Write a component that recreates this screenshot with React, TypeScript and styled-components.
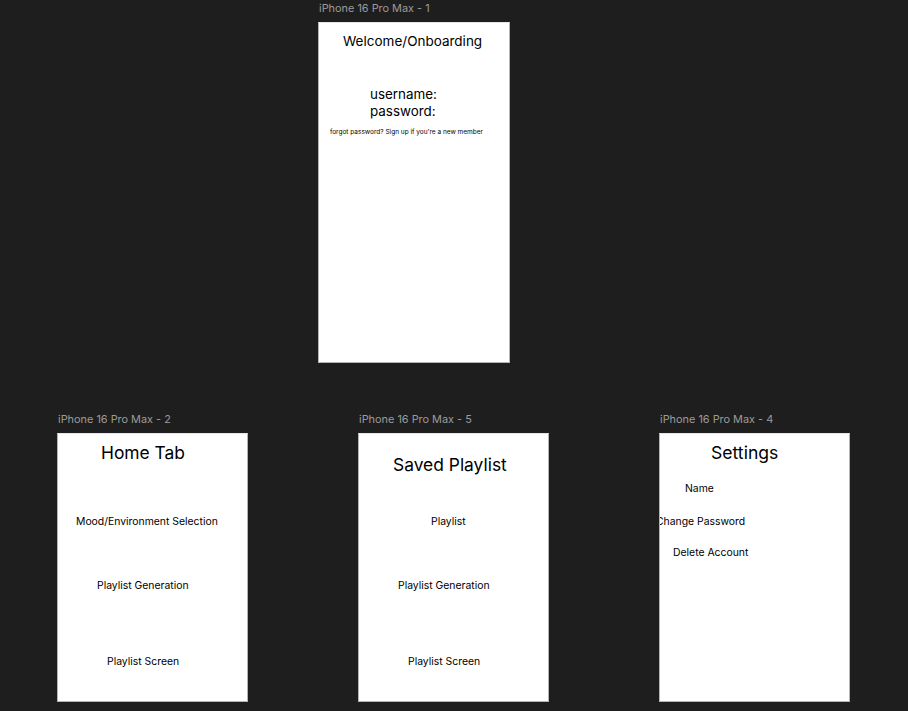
import React from "react";
import styled, { createGlobalStyle } from "styled-components";

const Global = createGlobalStyle`
  html, body {
    margin: 0;
    padding: 0;
    background: #1e1e1e;
  }
  body {
    font-family: Inter, "Noto Sans", "Liberation Sans", sans-serif;
  }
`;

const Canvas = styled.div`
  position: relative;
  width: 908px;
  height: 711px;
  overflow: hidden;
  background: #1e1e1e;
`;

const Artboard = styled.div<{ $left: number; $top: number }>`
  position: absolute;
  left: ${(p) => p.$left}px;
  top: ${(p) => p.$top}px;
  display: flex;
  flex-direction: column;
  gap: 7px;
`;

const BoardLabel = styled.div`
  font-size: 10.9px;
  line-height: 14px;
  color: #9b9b9b;
  padding-left: 1px;
  white-space: nowrap;
`;

const Frame = styled.div<{ $w: number; $h: number }>`
  box-sizing: border-box;
  width: ${(p) => p.$w}px;
  height: ${(p) => p.$h}px;
  background: #ffffff;
  border: 1px solid #b4b4b4;
  border-top-color: #e6e6e6;
  overflow: hidden;
  display: flex;
  flex-direction: column;
  align-items: flex-start;
`;

const Text = styled.div<{ $x: number; $y: number; $size: number; $lh: number }>`
  margin-left: ${(p) => p.$x - 1}px;
  margin-top: ${(p) => p.$y}px;
  font-size: ${(p) => p.$size}px;
  line-height: ${(p) => p.$lh}px;
  color: #000;
  white-space: nowrap;
`;

type Item = { t: string; x: number; y: number; s: number; lh: number };
type Board = { name: string; left: number; top: number; w: number; h: number; items: Item[] };

const boards: Board[] = [
  {
    name: "iPhone 16 Pro Max - 1",
    left: 318,
    top: 1,
    w: 192,
    h: 341,
    items: [
      { t: "Welcome/Onboarding", x: 25, y: 9, s: 13.5, lh: 18 },
      { t: "username:", x: 52, y: 35.5, s: 13.4, lh: 17 },
      { t: "password:", x: 52, y: 0, s: 13.4, lh: 17 },
      { t: "forgot password? Sign up if you're a new member", x: 12, y: 8, s: 6.5, lh: 9 },
    ],
  },
  {
    name: "iPhone 16 Pro Max - 2",
    left: 57,
    top: 412,
    w: 191,
    h: 269,
    items: [
      { t: "Home Tab", x: 44, y: 9, s: 17.4, lh: 20 },
      { t: "Mood/Environment Selection", x: 19, y: 51.5, s: 10.4, lh: 13 },
      { t: "Playlist Generation", x: 40, y: 51, s: 10.4, lh: 13 },
      { t: "Playlist Screen", x: 50, y: 63, s: 10.4, lh: 13 },
    ],
  },
  {
    name: "iPhone 16 Pro Max - 5",
    left: 358,
    top: 412,
    w: 191,
    h: 269,
    items: [
      { t: "Saved Playlist", x: 35, y: 21, s: 17.4, lh: 20 },
      { t: "Playlist", x: 73, y: 39.5, s: 10.4, lh: 13 },
      { t: "Playlist Generation", x: 40, y: 51, s: 10.4, lh: 13 },
      { t: "Playlist Screen", x: 50, y: 63, s: 10.4, lh: 13 },
    ],
  },
  {
    name: "iPhone 16 Pro Max - 4",
    left: 659,
    top: 412,
    w: 191,
    h: 269,
    items: [
      { t: "Settings", x: 52, y: 9, s: 17.6, lh: 20 },
      { t: "Name", x: 26, y: 18.5, s: 10.4, lh: 13 },
      { t: "Change Password", x: -3, y: 20, s: 10.4, lh: 13 },
      { t: "Delete Account", x: 14, y: 18, s: 10.4, lh: 13 },
    ],
  },
];

export default function App() {
  return (
    <>
      <Global />
      <Canvas>
        {boards.map((b) => (
          <Artboard key={b.name} $left={b.left} $top={b.top}>
            <BoardLabel>{b.name}</BoardLabel>
            <Frame $w={b.w} $h={b.h}>
              {b.items.map((it, i) => (
                <Text key={i} $x={it.x} $y={it.y} $size={it.s} $lh={it.lh}>
                  {it.t}
                </Text>
              ))}
            </Frame>
          </Artboard>
        ))}
      </Canvas>
    </>
  );
}
